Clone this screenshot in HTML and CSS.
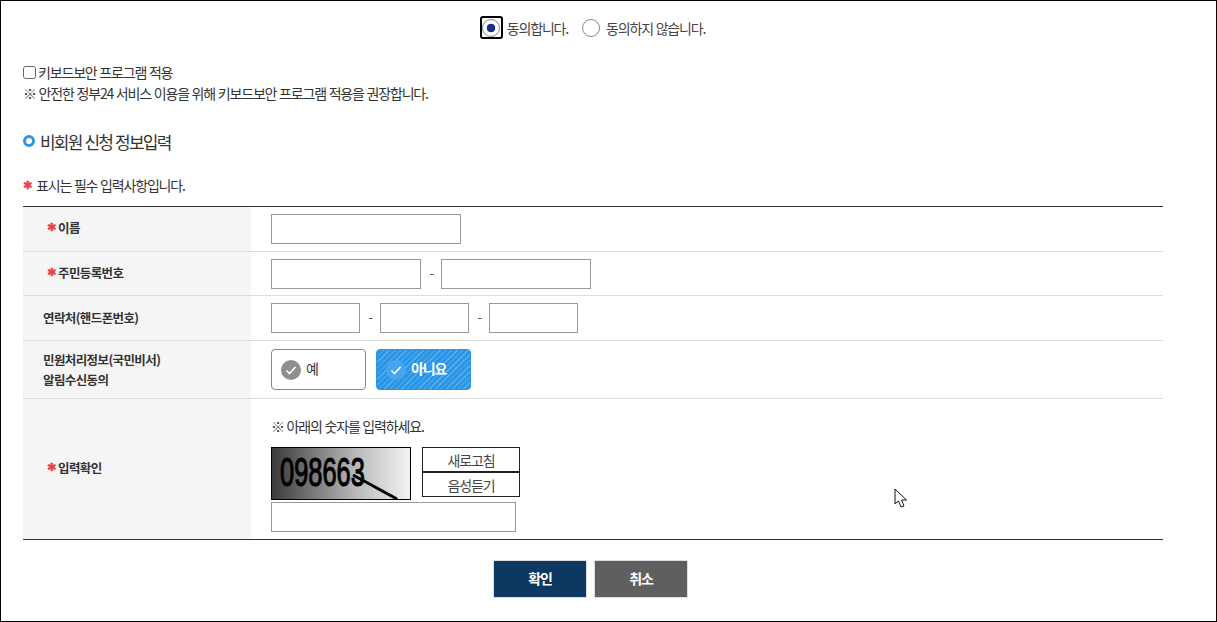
FILE: index.html
```html
<!DOCTYPE html>
<html lang="ko">
<head>
<meta charset="utf-8">
<title>비회원 신청 정보입력</title>
<link rel="stylesheet" href="styles.css">
</head>
<body>
<div class="page">
  <div class="agree">
    <label class="radio-item"><span class="focus-ring"><span class="radio radio-on"></span></span><span>동의합니다.</span></label>
    <label class="radio-item"><span class="radio"></span><span>동의하지 않습니다.</span></label>
  </div>
  <div class="keyboard">
    <label class="check-line"><span class="checkbox"></span><span>키보드보안 프로그램 적용</span></label>
    <p class="note">※ 안전한 정부24 서비스 이용을 위해 키보드보안 프로그램 적용을 권장합니다.</p>
  </div>
  <h2 class="section-title"><span class="ring"></span>비회원 신청 정보입력</h2>
  <p class="req-note"><span class="star">✱</span>표시는 필수 입력사항입니다.</p>
  <div class="form-table">
    <div class="row row-1">
      <div class="th th-req"><span class="star">✱</span>이름</div>
      <div class="td"><span class="input w190"></span></div>
    </div>
    <div class="row row-2">
      <div class="th th-req"><span class="star">✱</span>주민등록번호</div>
      <div class="td"><span class="input w150"></span><span class="dash">-</span><span class="input w150"></span></div>
    </div>
    <div class="row row-3">
      <div class="th th-low">연락처(핸드폰번호)</div>
      <div class="td"><span class="input w89"></span><span class="dash">-</span><span class="input w89"></span><span class="dash">-</span><span class="input w89"></span></div>
    </div>
    <div class="row row-4">
      <div class="th th-two">민원처리정보(국민비서)<br>알림수신동의</div>
      <div class="td td-choice">
        <span class="choice"><span class="tick tick-grey"><svg viewBox="0 0 20 20" width="20" height="20"><path d="M5.500 10.500l3 3 6-6.500" fill="none" stroke="#fff" stroke-width="1.6"/></svg></span>예</span>
        <span class="choice choice-on"><span class="tick tick-blue"><svg viewBox="0 0 20 20" width="20" height="20"><path d="M5.500 10.500l3 3 6-6.500" fill="none" stroke="#fff" stroke-width="1.6"/></svg></span>아니요</span>
      </div>
    </div>
    <div class="row row-5">
      <div class="th th-req"><span class="star">✱</span>입력확인</div>
      <div class="td td-captcha">
        <p class="captcha-note">※ 아래의 숫자를 입력하세요.</p>
        <div class="captcha-line">
          <div class="captcha-img">
            <svg viewBox="0 0 138 51" width="138" height="51">
              <text transform="translate(8 38) scale(.62 1)" class="captcha-num">098663</text>
              <path d="M81 27L125 51" stroke="#000" stroke-width="3" fill="none"/>
            </svg>
          </div>
          <div class="captcha-btns">
            <span class="cap-btn">새로고침</span>
            <span class="cap-btn">음성듣기</span>
          </div>
        </div>
        <span class="input w245"></span>
      </div>
    </div>
  </div>
  <div class="actions">
    <span class="btn btn-ok">확인</span>
    <span class="btn btn-cancel">취소</span>
  </div>
  <svg class="cursor" viewBox="0 0 14 20" width="14" height="20"><path d="M1 1V16L4.500 13L7 19L10 18L7.500 12H12.500Z" fill="#fff" stroke="#111" stroke-width="1"/></svg>
</div>
</body>
</html>
```

FILE: styles.css
```css
* { box-sizing: border-box; }
html, body { margin: 0; padding: 0; background: #fff; }
body {
  font-family: "Noto Sans CJK KR", "Noto Sans", sans-serif;
  font-size: 14px;
  color: #333;
  letter-spacing: -1.17px;
}
p, h2 { margin: 0; }
.page {
  position: relative;
  width: 1217px;
  height: 622px;
  border: 1px solid #000;
  padding: 0 0 0 22px;
  overflow: hidden;
}
.agree {
  display: flex;
  justify-content: center;
  align-items: center;
  gap: 14px;
  height: 23px;
  margin: 15px 32px 0 -22px;
  color: #444;
}
.radio-item { display: flex; align-items: center; gap: 4px; }
.radio-item + .radio-item { gap: 6px; }
.focus-ring {
  display: flex;
  align-items: center;
  justify-content: center;
  width: 23px;
  height: 23px;
  border: 2px solid #000;
  border-radius: 3px;
}
.radio {
  display: block;
  width: 18px;
  height: 18px;
  border: 1px solid #888;
  border-radius: 50%;
  background: #fff;
}
.radio-on {
  background: radial-gradient(circle, #1c2f86 0 4px, #fff 4.6px);
}
.keyboard { margin-top: 23px; }
.check-line { display: flex; align-items: center; gap: 2px; height: 20px; }
.checkbox {
  display: block;
  width: 13px;
  height: 13px;
  border: 1px solid #666;
  border-radius: 2.5px;
  background: #fff;
}
.note { line-height: 20px; margin-top: 1px; }
.section-title {
  display: flex;
  align-items: center;
  gap: 5px;
  margin-top: 26px;
  height: 24px;
  font-size: 17px;
  font-weight: 400;
  letter-spacing: -1.8px;
  color: #333;
}
.ring {
  display: block;
  width: 12px;
  height: 12px;
  border: 3px solid #2b96e6;
  border-radius: 50%;
}
.req-note { margin-top: 22px; line-height: 20px; display: flex; align-items: center; }
.star {
  display: inline-block;
  width: 13px;
  color: #e8414f;
  font-family: "DejaVu Sans", sans-serif;
  font-weight: 400;
  font-size: 11px;
  line-height: 13px;
  height: 13px;
  letter-spacing: 0;
  -webkit-text-stroke: 0.5px #e8414f;
}
.form-table {
  width: 1140px;
  margin-top: 11px;
  border-top: 1px solid #333;
  border-bottom: 1px solid #333;
}
.row { display: flex; border-bottom: 1px solid #ddd; }
.row:last-child { border-bottom: 0; }
.row-1 { height: 45px; }
.row-2 { height: 44px; }
.row-3 { height: 45px; }
.row-4 { height: 58px; }
.row-5 { height: 140px; }
.th {
  display: flex;
  align-items: center;
  width: 228px;
  flex: none;
  padding: 0 0 3px 20px;
  background: #f5f5f5;
  font-weight: 700;
  font-size: 12.5px;
  letter-spacing: -0.6px;
  color: #333;
}
.th-req { padding-left: 24px; }
.th-req .star { width: 11px; }
.th-low { padding-bottom: 1px; }
.th-two { display: block; padding: 9px 0 0 20px; line-height: 20px; }
.td { display: flex; align-items: flex-start; padding: 7px 0 0 20px; flex: 1; }
.input {
  display: block;
  height: 30px;
  border: 1px solid #999;
  background: #fff;
}
.w190 { width: 190px; }
.w150 { width: 150px; }
.w89 { width: 89px; }
.w245 { width: 245px; }
.dash { width: 20px; text-align: center; line-height: 30px; color: #555; }
.td-choice { gap: 10px; padding-top: 8px; }
.choice {
  display: flex;
  align-items: center;
  gap: 5px;
  width: 95px;
  height: 41px;
  padding: 0 0 3px 9px;
  border: 1px solid #888;
  border-radius: 4px;
  color: #333;
}
.choice-on {
  border-color: #2b96e6;
  color: #fff;
  font-weight: 700;
  background-color: #2b96e6;
  background-image: repeating-linear-gradient(-45deg, rgba(255,255,255,.22) 0 1px, transparent 1px 4px);
}
.tick {
  display: block;
  width: 20px;
  height: 20px;
  margin-top: 3px;
  border-radius: 50%;
}
.tick svg { display: block; }
.tick-grey { background: #8f8f8f; }
.tick-blue { background: #45a5f0; }
.td-captcha { display: block; padding-top: 17px; }
.captcha-note { line-height: 20px; }
.captcha-line { display: flex; gap: 11px; margin-top: 11px; height: 55px; }
.captcha-img {
  width: 140px;
  height: 53px;
  border: 1px solid #000;
  background: linear-gradient(90deg, #3a3a3a, #b8b8b8 60%, #f2f2f2);
}
.captcha-img svg { display: block; }
.captcha-num {
  font-family: "Liberation Sans", sans-serif;
  font-size: 41px;
  letter-spacing: 0;
  fill: #000;
  stroke: #000;
  stroke-width: 1.2px;
}
.captcha-btns { display: flex; flex-direction: column; width: 98px; }
.cap-btn {
  display: flex;
  align-items: center;
  justify-content: center;
  height: 25px;
  border: 1px solid #222;
  color: #444;
}
.actions { display: flex; justify-content: center; gap: 7px; margin: 20px 36px 0 -22px; }
.btn {
  display: flex;
  align-items: center;
  justify-content: center;
  width: 94px;
  height: 38px;
  padding-bottom: 2px;
  border: 1px solid #ddd;
  color: #fff;
  font-weight: 700;
}
.btn-ok { background: #0d3862; }
.btn-cancel { background: #5f5f5f; }
.cursor { position: absolute; left: 893px; top: 487px; }
```
